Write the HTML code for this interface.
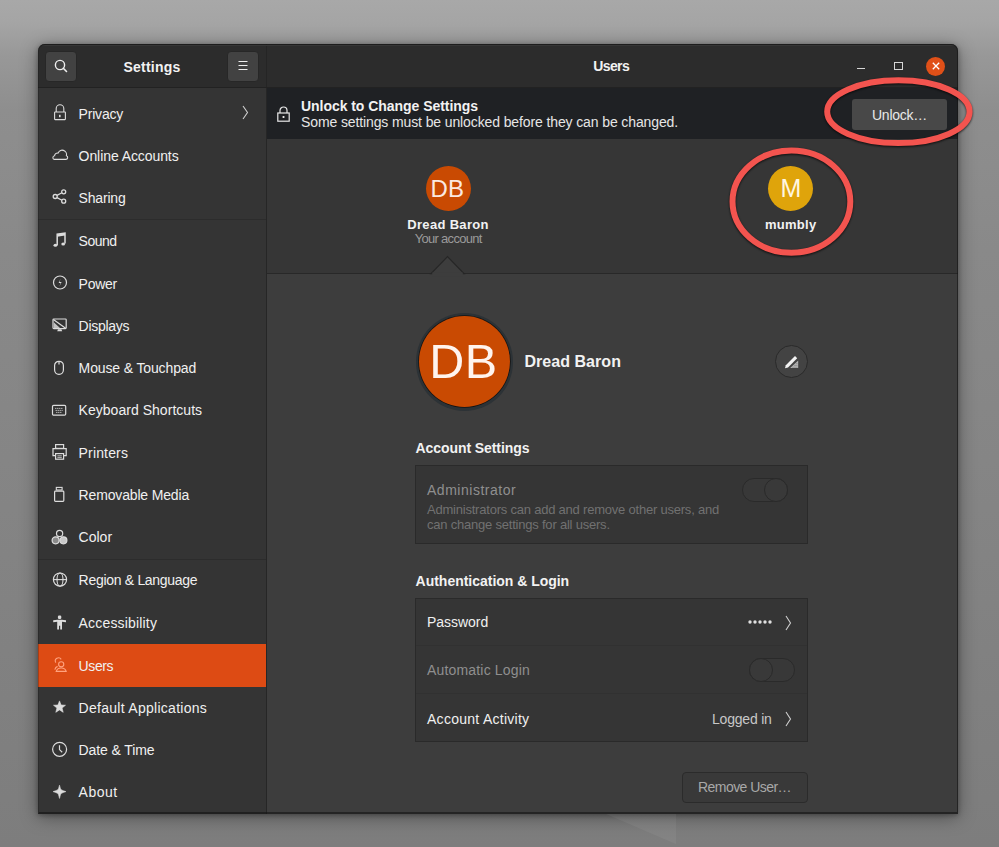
<!DOCTYPE html>
<html><head><meta charset="utf-8">
<style>
*{margin:0;padding:0;box-sizing:border-box}
html,body{width:999px;height:847px;overflow:hidden}
body{position:relative;font-family:"Liberation Sans",sans-serif;
 background:linear-gradient(180deg,#a8a8a8 0px,#a5a5a5 22px,#989898 55px,#8e8e8e 110px,#898989 250px,#858585 460px,#818181 650px,#7d7d7d 847px)}
.a{position:absolute}
.t{position:absolute;white-space:pre;font-family:"Liberation Sans",sans-serif}
.win{left:38px;top:44px;width:920px;height:770px;border-radius:7px 7px 0 0;background:#3d3d3d;
 box-shadow:0 1px 5px rgba(0,0,0,.32),0 3px 18px rgba(0,0,0,.38);overflow:hidden}
svg{position:absolute;overflow:visible}
</style></head><body>
<div class="a win">
  <!-- header -->
  <div class="a" style="left:0;top:0;width:920px;height:44px;background:#2c2c2c"></div>
  <div class="a" style="left:228px;top:0;width:1px;height:44px;background:#252525"></div>
  <div class="a" style="left:4px;top:1px;width:912px;height:1px;background:#363636"></div>
  <div class="a" style="left:0;top:43px;width:920px;height:1px;background:#222"></div>
  <!-- sidebar -->
  <div class="a" style="left:0;top:44px;width:228px;height:726px;background:#343434"></div>
  <div class="a" style="left:228px;top:44px;width:1px;height:726px;background:#262626"></div>
  <div class="a" style="left:0;top:175px;width:228px;height:1px;background:#2c2c2c"></div>
  <div class="a" style="left:0;top:515px;width:228px;height:1px;background:#2c2c2c"></div>
  <div class="a" style="left:0;top:599.5px;width:228px;height:43px;background:#dd4b14"></div>
  <!-- info bar -->
  <div class="a" style="left:229px;top:44px;width:691px;height:51px;background:#1f2124"></div>
  <!-- carousel -->
  <div class="a" style="left:229px;top:95px;width:691px;height:134px;background:#363636"></div>
  <div class="a" style="left:229px;top:229px;width:691px;height:1px;background:#282828"></div>
</div>

<!-- header buttons -->
<div class="a" style="left:45px;top:51px;width:32px;height:31px;border-radius:4px;background:#424242;border:1px solid #272727"></div>
<svg style="left:54px;top:59px" width="14" height="14" viewBox="0 0 14 14"><circle cx="6" cy="6" r="4.6" fill="none" stroke="#eee" stroke-width="1.4"/><path d="M9.3 9.3L12.5 12.5" stroke="#eee" stroke-width="1.6" stroke-linecap="round"/></svg>
<div class="a" style="left:227px;top:51px;width:32px;height:31px;border-radius:4px;background:#424242;border:1px solid #272727"></div>
<svg style="left:237px;top:60px" width="12" height="12" viewBox="0 0 12 12"><path d="M1.5 1.5h9M1.5 5.5h9M1.5 9.5h9" stroke="#eee" stroke-width="1.2"/></svg>

<!-- window controls -->
<div class="a" style="left:857px;top:68px;width:7.5px;height:1.2px;background:#d6d6d6"></div>
<div class="a" style="left:894px;top:62px;width:8.5px;height:8px;border:1.1px solid #d6d6d6"></div>
<div class="a" style="left:926.3px;top:56.7px;width:19px;height:19px;border-radius:50%;background:#e05018"></div>
<svg style="left:930.8px;top:61.2px" width="10" height="10" viewBox="0 0 10 10"><path d="M1.8 1.8L8.2 8.2M8.2 1.8L1.8 8.2" stroke="#fff" stroke-width="1.3"/></svg>

<!-- sidebar chevron -->
<svg style="left:242px;top:105px" width="7" height="15" viewBox="0 0 7 15"><path d="M1 1L5.5 7.5L1 14" fill="none" stroke="#cfcfcf" stroke-width="1.1"/></svg>

<!-- info bar lock -->
<svg style="left:277px;top:106px" width="13" height="16" viewBox="0 0 13 16"><path d="M3 7V4.5a3.5 3.5 0 0 1 7 0V7" fill="none" stroke="#e8e8e8" stroke-width="1.2"/><rect x="0.8" y="7" width="11.4" height="8.2" fill="none" stroke="#e8e8e8" stroke-width="1.2"/><rect x="5.6" y="10" width="1.8" height="2" fill="#e8e8e8"/></svg>

<!-- unlock button -->
<div class="a" style="left:852px;top:99px;width:95px;height:31px;border-radius:3px;background:#484848"></div>

<!-- carousel avatars -->
<div class="a" style="left:425.5px;top:166px;width:45px;height:45px;border-radius:50%;background:#c94a02"></div>
<div class="a" style="left:768px;top:165.7px;width:45px;height:45px;border-radius:50%;background:#dfa40b"></div>
<!-- triangle -->
<svg style="left:431px;top:255px" width="34" height="22" viewBox="0 0 34 22"><path d="M0 18.6L16.5 1.6L33 18.6Z" fill="#3d3d3d" stroke="#262626" stroke-width="1.3"/><rect x="1.2" y="17.6" width="30.6" height="4" fill="#3d3d3d"/></svg>

<!-- big avatar -->
<div class="a" style="left:415.5px;top:312.5px;width:97.5px;height:98px;border-radius:50%;background:#2c3236"></div>
<div class="a" style="left:418.7px;top:316px;width:91px;height:91px;border-radius:50%;background:#c94a02;box-shadow:0 0 0 0.8px #141414"></div>
<!-- edit button -->
<div class="a" style="left:775px;top:345px;width:33px;height:33px;border-radius:50%;background:#434343;border:1px solid #2a2a2a"></div>
<svg style="left:784px;top:354px" width="16" height="16" viewBox="0 0 16 16"><path d="M1 14.2L1.8 11.2L11 2L13.2 4.2L4 13.4Z" fill="#f2f2f2"/><path d="M6.2 14L14.2 6.4V14Z" fill="#b5b5b5"/><path d="M8 13.2h5.6M10 11.4h3.6M12 9.6h1.6" stroke="#8a8a8a" stroke-width="0.7"/></svg>

<!-- frame 1 -->
<div class="a" style="left:415px;top:465px;width:393px;height:79px;background:#353535;border:1px solid #2a2a2a"></div>
<div class="a" style="left:742px;top:477.5px;width:46px;height:24px;border-radius:12px;background:#383838;border:1px solid #2a2a2a"></div>
<div class="a" style="left:764px;top:477.5px;width:24px;height:24px;border-radius:50%;background:#393939;border:1px solid #2a2a2a"></div>

<!-- frame 2 -->
<div class="a" style="left:415px;top:598px;width:393px;height:144px;background:#353535;border:1px solid #2a2a2a"></div>
<div class="a" style="left:416px;top:645px;width:391px;height:1px;background:#313131"></div>
<div class="a" style="left:416px;top:693px;width:391px;height:1px;background:#313131"></div>
<svg style="left:748px;top:619px" width="25" height="6" viewBox="0 0 25 6"><g fill="#e0e0e0"><circle cx="2" cy="3" r="1.7"/><circle cx="7" cy="3" r="1.7"/><circle cx="12" cy="3" r="1.7"/><circle cx="17" cy="3" r="1.7"/><circle cx="22" cy="3" r="1.7"/></g></svg>
<svg style="left:785px;top:615px" width="7" height="16" viewBox="0 0 7 16"><path d="M1 1L5.5 8L1 15" fill="none" stroke="#cfcfcf" stroke-width="1.1"/></svg>
<div class="a" style="left:748.6px;top:657.5px;width:46.4px;height:24px;border-radius:12px;background:#383838;border:1px solid #2a2a2a"></div>
<div class="a" style="left:748.6px;top:657.5px;width:24px;height:24px;border-radius:50%;background:#393939;border:1px solid #2a2a2a"></div>
<svg style="left:785px;top:711px" width="7" height="16" viewBox="0 0 7 16"><path d="M1 1L5.5 8L1 15" fill="none" stroke="#cfcfcf" stroke-width="1.1"/></svg>

<!-- remove user button -->
<div class="a" style="left:682px;top:771.5px;width:126px;height:31.5px;border-radius:4px;background:#393939;border:1px solid #2b2b2b"></div>

<div class="a" style="left:38px;top:44px;width:920px;height:770px;border-radius:7px 7px 0 0;border:1px solid rgba(20,20,20,.6);border-bottom-width:2px;border-left-color:rgba(20,20,20,.25)"></div>
<svg style="left:48px;top:100px" width="24" height="24" viewBox="0 0 24 24" fill="none" stroke="#dcdcdc" stroke-width="1.1"><path d="M8.2 12V8.6a3.8 3.8 0 0 1 7.6 0V12"/><rect x="6.6" y="12" width="10.8" height="7.6" rx="0.5"/><rect x="11" y="14.8" width="1.6" height="2.4" fill="#dcdcdc" stroke="none"/></svg>
<svg style="left:48px;top:143px" width="24" height="24" viewBox="0 0 24 24" fill="none" stroke="#dcdcdc" stroke-width="1.1"><path d="M6.2 16.4h11.6a1.9 1.9 0 0 0 0.6-3.7 4.4 4.4 0 0 0-8.4-2.6 2.9 2.9 0 0 0-3.4 2.6 1.9 1.9 0 0 0-0.4 3.7z"/></svg>
<svg style="left:48px;top:185px" width="24" height="24" viewBox="0 0 24 24" fill="none" stroke="#dcdcdc" stroke-width="1.1"><circle cx="15.7" cy="6.8" r="2.0" stroke-width="1.3"/><circle cx="7.2" cy="11.5" r="2.0" stroke-width="1.3"/><circle cx="15.7" cy="16.2" r="2.0" stroke-width="1.3"/><path d="M9 10.4L13.9 7.8M9 12.6L13.9 15.2" stroke-width="1.2"/></svg>
<svg style="left:48px;top:228px" width="24" height="24" viewBox="0 0 24 24" fill="none" stroke="#dcdcdc" stroke-width="1.1"><path d="M9.2 17.2V6.2L17 5V15.6" stroke-width="1.5"/><path d="M9.2 6.2L17 5V7.6L9.2 8.8Z" fill="#dcdcdc" stroke="none"/><ellipse cx="7.4" cy="17.3" rx="1.9" ry="1.5" fill="#dcdcdc" stroke="none"/><ellipse cx="15.2" cy="16" rx="1.9" ry="1.5" fill="#dcdcdc" stroke="none"/></svg>
<svg style="left:48px;top:271px" width="24" height="24" viewBox="0 0 24 24" fill="none" stroke="#dcdcdc" stroke-width="1.1"><circle cx="12" cy="11.5" r="6.5" stroke-width="1.2"/><path d="M12.6 7.8L10.6 12H12.6L11.4 15.4L13.6 11H11.6Z" fill="#dcdcdc" stroke="none"/></svg>
<svg style="left:48px;top:313px" width="24" height="24" viewBox="0 0 24 24" fill="none" stroke="#dcdcdc" stroke-width="1.1"><rect x="5" y="6" width="13.2" height="9.6" rx="0.8" stroke-width="1.2"/><path d="M5.4 6.6L17.6 15.2" stroke-width="1.2"/><path d="M5.8 9.2V15H12Z" fill="#dcdcdc" stroke="none" opacity="0.85"/><path d="M10 16.2h3.4l0.8 2h-5z" fill="#dcdcdc" stroke="none"/></svg>
<svg style="left:48px;top:356px" width="24" height="24" viewBox="0 0 24 24" fill="none" stroke="#dcdcdc" stroke-width="1.1"><rect x="6.6" y="5.3" width="8.8" height="13" rx="4.2" stroke-width="1.2"/><path d="M11 5.6V8.4" stroke-width="1.2"/></svg>
<svg style="left:48px;top:398px" width="24" height="24" viewBox="0 0 24 24" fill="none" stroke="#dcdcdc" stroke-width="1.1"><rect x="4.5" y="7.3" width="13.2" height="9.8" rx="1.2" stroke-width="1.2"/><path d="M7.2 10.4h7.8M7.6 12.4h7M8.2 14.4h6" stroke-width="0.9" stroke-dasharray="1.2 0.8"/></svg>
<svg style="left:48px;top:440px" width="24" height="24" viewBox="0 0 24 24" fill="none" stroke="#dcdcdc" stroke-width="1.1"><rect x="7.6" y="4.6" width="8" height="3.8" stroke-width="1.2"/><path d="M7.2 15.6H5V8.6H18.2V15.6H16" stroke-width="1.2"/><rect x="7.6" y="13.6" width="8" height="5.6" stroke-width="1.2"/><path d="M9.4 15.8h4.4M9.4 17.4h4.4" stroke-width="0.8"/></svg>
<svg style="left:48px;top:483px" width="24" height="24" viewBox="0 0 24 24" fill="none" stroke="#dcdcdc" stroke-width="1.1"><rect x="8.3" y="4.4" width="5.8" height="2.6" stroke-width="1.1"/><rect x="6.6" y="8.2" width="9.2" height="10.2" rx="0.8" stroke-width="1.2"/></svg>
<svg style="left:48px;top:525px" width="24" height="24" viewBox="0 0 24 24" fill="none" stroke="#dcdcdc" stroke-width="1.1"><circle cx="11.6" cy="8.5" r="3.1" stroke-width="1.2"/><circle cx="7.6" cy="15.3" r="3.5" fill="#8a8a8a" stroke-width="1.2"/><circle cx="15.4" cy="15.3" r="3.5" fill="#c8c8c8" stroke-width="1.2"/></svg>
<svg style="left:48px;top:568px" width="24" height="24" viewBox="0 0 24 24" fill="none" stroke="#dcdcdc" stroke-width="1.1"><circle cx="12" cy="11.6" r="6.6" stroke-width="1.2"/><ellipse cx="12" cy="11.6" rx="3" ry="6.6" stroke-width="1.1"/><path d="M5.4 11.6H18.6" stroke-width="1.1"/></svg>
<svg style="left:48px;top:610px" width="24" height="24" viewBox="0 0 24 24" fill="none" stroke="#dcdcdc" stroke-width="1.1"><rect x="9.9" y="5.6" width="3.4" height="3.4" rx="1.2" fill="#dcdcdc" stroke="none"/><path d="M5.2 10.2L9.4 9.8H13.8L18 10.2V12.2L14 11.8V19.6H12.2V15.8H11V19.6H9.2V11.8L5.2 12.2Z" fill="#dcdcdc" stroke="none"/></svg>
<svg style="left:48px;top:653px" width="24" height="24" viewBox="0 0 24 24" fill="none" stroke="#ffa27e" stroke-width="1.1"><circle cx="13.2" cy="11.3" r="2.6"/><path d="M8.2 18.4c0.6-2.4 2.4-3.4 5-3.4s4.4 1 5 3.4Z"/><path d="M7.8 9.6A3 3 0 0 1 13.2 6.4"/><path d="M9.6 13.4C8.2 13.8 7.2 15 6.8 16.6"/></svg>
<svg style="left:48px;top:695px" width="24" height="24" viewBox="0 0 24 24" fill="none" stroke="#dcdcdc" stroke-width="1.1"><polygon points="11.50,5.90 13.09,10.02 17.49,10.25 14.07,13.03 15.20,17.30 11.50,14.90 7.80,17.30 8.93,13.03 5.51,10.25 9.91,10.02" fill="#dcdcdc" stroke="#dcdcdc" stroke-width="0.6" stroke-linejoin="round"/></svg>
<svg style="left:48px;top:738px" width="24" height="24" viewBox="0 0 24 24" fill="none" stroke="#dcdcdc" stroke-width="1.1"><circle cx="11.6" cy="11.3" r="7" stroke-width="1.2"/><path d="M11.5 7.2V11.6L14.2 14.2" stroke-width="1.2"/></svg>
<svg style="left:48px;top:780px" width="24" height="24" viewBox="0 0 24 24" fill="none" stroke="#dcdcdc" stroke-width="1.1"><path d="M11.5 5.2Q12.4 9.6 13.5 9.9Q14.6 10.6 17.9 11.6Q14.6 12.6 13.5 13.3Q12.4 13.6 11.5 18.4Q10.6 13.6 9.5 13.3Q8.4 12.6 5.1 11.6Q8.4 10.6 9.5 9.9Q10.6 9.6 11.5 5.2Z" fill="#dcdcdc" stroke="#dcdcdc" stroke-width="0.6" stroke-linejoin="round"/></svg>
<div class="t" style="left:123.50px;top:59.15px;font-size:14px;line-height:16px;font-weight:700;color:#f2f2f2;letter-spacing:0.221px;">Settings</div>
<div class="t" style="left:593.20px;top:58.35px;font-size:14px;line-height:16px;font-weight:700;color:#f2f2f2;letter-spacing:-0.584px;">Users</div>
<div class="t" style="left:301.00px;top:98.15px;font-size:14px;line-height:16px;font-weight:700;color:#f2f2f2;letter-spacing:-0.045px;">Unlock to Change Settings</div>
<div class="t" style="left:301.00px;top:114.15px;font-size:14px;line-height:16px;font-weight:400;color:#e6e6e6;letter-spacing:-0.115px;">Some settings must be unlocked before they can be changed.</div>
<div class="t" style="left:872.00px;top:106.55px;font-size:14px;line-height:16px;font-weight:400;color:#e8e8e8;letter-spacing:-0.257px;">Unlock…</div>
<div class="t" style="left:78.60px;top:105.75px;font-size:14px;line-height:16px;font-weight:400;color:#f0f0f0;letter-spacing:-0.201px;">Privacy</div>
<div class="t" style="left:78.60px;top:147.85px;font-size:14px;line-height:16px;font-weight:400;color:#f0f0f0;letter-spacing:-0.078px;">Online Accounts</div>
<div class="t" style="left:78.60px;top:190.35px;font-size:14px;line-height:16px;font-weight:400;color:#f0f0f0;letter-spacing:-0.181px;">Sharing</div>
<div class="t" style="left:78.60px;top:233.15px;font-size:14px;line-height:16px;font-weight:400;color:#f0f0f0;letter-spacing:-0.497px;">Sound</div>
<div class="t" style="left:78.60px;top:275.85px;font-size:14px;line-height:16px;font-weight:400;color:#f0f0f0;letter-spacing:-0.278px;">Power</div>
<div class="t" style="left:78.60px;top:317.85px;font-size:14px;line-height:16px;font-weight:400;color:#f0f0f0;letter-spacing:-0.301px;">Displays</div>
<div class="t" style="left:78.60px;top:360.15px;font-size:14px;line-height:16px;font-weight:400;color:#f0f0f0;letter-spacing:-0.130px;">Mouse &amp; Touchpad</div>
<div class="t" style="left:78.60px;top:402.15px;font-size:14px;line-height:16px;font-weight:400;color:#f0f0f0;letter-spacing:0.030px;">Keyboard Shortcuts</div>
<div class="t" style="left:78.60px;top:445.15px;font-size:14px;line-height:16px;font-weight:400;color:#f0f0f0;letter-spacing:0.158px;">Printers</div>
<div class="t" style="left:78.60px;top:487.15px;font-size:14px;line-height:16px;font-weight:400;color:#f0f0f0;letter-spacing:-0.156px;">Removable Media</div>
<div class="t" style="left:78.60px;top:529.15px;font-size:14px;line-height:16px;font-weight:400;color:#f0f0f0;letter-spacing:0.006px;">Color</div>
<div class="t" style="left:78.60px;top:572.15px;font-size:14px;line-height:16px;font-weight:400;color:#f0f0f0;letter-spacing:-0.299px;">Region &amp; Language</div>
<div class="t" style="left:78.60px;top:615.15px;font-size:14px;line-height:16px;font-weight:400;color:#f0f0f0;letter-spacing:0.173px;">Accessibility</div>
<div class="t" style="left:78.60px;top:657.65px;font-size:14px;line-height:16px;font-weight:400;color:#f0f0f0;letter-spacing:-0.412px;">Users</div>
<div class="t" style="left:78.60px;top:699.65px;font-size:14px;line-height:16px;font-weight:400;color:#f0f0f0;letter-spacing:0.277px;">Default Applications</div>
<div class="t" style="left:78.60px;top:742.45px;font-size:14px;line-height:16px;font-weight:400;color:#f0f0f0;letter-spacing:-0.102px;">Date &amp; Time</div>
<div class="t" style="left:78.60px;top:784.35px;font-size:14px;line-height:16px;font-weight:400;color:#f0f0f0;letter-spacing:0.481px;">About</div>
<div class="t" style="left:430.40px;top:174.78px;font-size:24px;line-height:28px;font-weight:400;color:#fbe9e0;letter-spacing:0.328px;">DB</div>
<div class="t" style="left:407.30px;top:217.30px;font-size:13px;line-height:15px;font-weight:700;color:#f2f2f2;letter-spacing:0.315px;">Dread Baron</div>
<div class="t" style="left:414.70px;top:231.40px;font-size:13px;line-height:15px;font-weight:400;color:#9a9a9a;letter-spacing:-0.702px;">Your account</div>
<div class="t" style="left:780.60px;top:174.24px;font-size:25px;line-height:29px;font-weight:400;color:#fff6e0;letter-spacing:-3.428px;">M</div>
<div class="t" style="left:765.00px;top:216.60px;font-size:13px;line-height:15px;font-weight:700;color:#f2f2f2;letter-spacing:0.259px;">mumbly</div>
<div class="t" style="left:429.20px;top:332.99px;font-size:48.5px;line-height:56px;font-weight:400;color:#fff4ee;letter-spacing:0.562px;">DB</div>
<div class="t" style="left:524.40px;top:352.76px;font-size:16px;line-height:18px;font-weight:700;color:#f2f2f2;letter-spacing:0.052px;">Dread Baron</div>
<div class="t" style="left:415.60px;top:440.05px;font-size:14px;line-height:16px;font-weight:700;color:#f2f2f2;letter-spacing:-0.083px;">Account Settings</div>
<div class="t" style="left:427.00px;top:481.65px;font-size:14px;line-height:16px;font-weight:400;color:#8f8f8f;letter-spacing:0.518px;">Administrator</div>
<div class="t" style="left:427.00px;top:502.30px;font-size:13px;line-height:15px;font-weight:400;color:#717171;letter-spacing:-0.216px;">Administrators can add and remove other users, and</div>
<div class="t" style="left:427.00px;top:517.00px;font-size:13px;line-height:15px;font-weight:400;color:#717171;letter-spacing:-0.214px;">can change settings for all users.</div>
<div class="t" style="left:415.60px;top:573.05px;font-size:14px;line-height:16px;font-weight:700;color:#f2f2f2;letter-spacing:-0.019px;">Authentication &amp; Login</div>
<div class="t" style="left:427.00px;top:614.45px;font-size:14px;line-height:16px;font-weight:400;color:#f0f0f0;letter-spacing:-0.034px;">Password</div>
<div class="t" style="left:427.00px;top:662.25px;font-size:14px;line-height:16px;font-weight:400;color:#8f8f8f;letter-spacing:0.173px;">Automatic Login</div>
<div class="t" style="left:427.00px;top:710.65px;font-size:14px;line-height:16px;font-weight:400;color:#f0f0f0;letter-spacing:0.272px;">Account Activity</div>
<div class="t" style="left:712.00px;top:710.55px;font-size:14px;line-height:16px;font-weight:400;color:#c8c8c8;letter-spacing:-0.202px;">Logged in</div>
<div class="t" style="left:698.00px;top:778.65px;font-size:14px;line-height:16px;font-weight:400;color:#a8a8a8;letter-spacing:-0.549px;">Remove User…</div>

<svg style="left:0;top:0" width="999" height="847"><polygon points="606,814 676,814 676,844" fill="rgba(255,255,255,0.05)"/></svg>
<!-- annotations -->
<svg style="left:0;top:0;filter:drop-shadow(0 1px 1.2px rgba(0,0,0,.75))" width="999" height="847" viewBox="0 0 999 847">
 <ellipse cx="898.4" cy="111.7" rx="71.2" ry="31.4" fill="none" stroke="#f3544f" stroke-width="6"/>
 <ellipse cx="791.4" cy="201.6" rx="58.9" ry="51.2" fill="none" stroke="#f3544f" stroke-width="6"/>
</svg>
</body></html>
